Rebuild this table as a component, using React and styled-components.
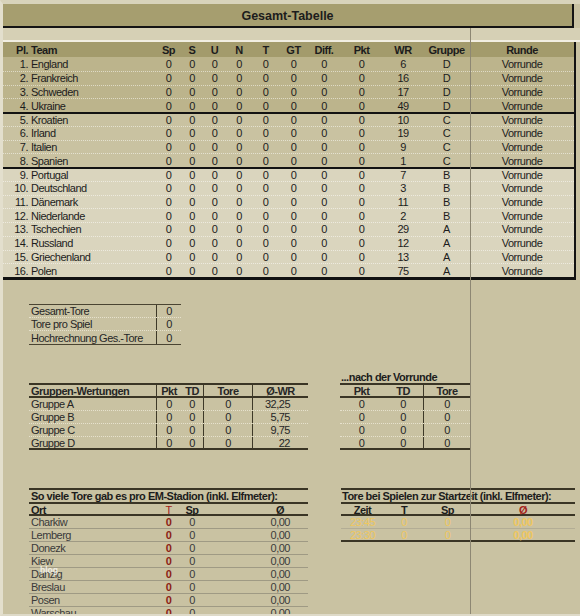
import React from "react";
import styled, { createGlobalStyle } from "styled-components";

const GlobalStyle = createGlobalStyle`
  html, body {
    margin: 0;
    padding: 0;
    background: #c9c2a2;
  }
  body {
    font-family: "Liberation Sans", Arial, sans-serif;
    font-size: 11px;
    letter-spacing: -0.5px;
    color: #1c1c1c;
  }
`;

const MAIN_COLS = "26px 127px 25px 22px 23px 26px 27px 29px 32px 43px 40px 47px 104px";
const GROUP_COLS = "127px 25px 22px 49px 56px";
const SMALL_COLS = "127px 25px";
const RIGHT_COLS = "43px 40px 47px";
const START_COLS = "43px 40px 47px 104px";

const bands = ["#bcb48c", "#c9c2a1", "#dad5be"];

const Page = styled.div`
  position: relative;
  width: 580px;
  height: 616px;
  overflow: hidden;
  box-sizing: border-box;
  border-left: 3px solid #e3dfcd;
  border-top: 4px solid #d8d3bb;
  border-bottom: 2px solid #dedac8;
  background: #c9c2a2;
`;

const PageBreak = styled.div`
  position: absolute;
  left: 467px;
  top: -4px;
  bottom: -2px;
  width: 1px;
  background: #8d8773;
  z-index: 1;
`;

const Watermark = styled.span`
  position: absolute;
  left: 37px;
  top: 561px;
  font-size: 8.5px;
  font-weight: bold;
  letter-spacing: 0;
  color: rgba(255, 255, 255, 0.75);
  z-index: 3;
`;

const TitleBar = styled.div`
  position: relative;
  z-index: 2;
  width: 571px;
  height: 24px;
  display: flex;
  align-items: center;
  justify-content: center;
  padding-top: 1px;
  box-sizing: border-box;
  background: #a69e6f;
  border-right: 2px solid #141414;
  border-bottom: 2px solid #141414;
  font-weight: bold;
  font-size: 12.5px;
  letter-spacing: 0;
`;

const Strip = styled.div`
  height: 12px;
  background: #d6d0b5;
  border-bottom: 2px solid #f1eee2;
`;

const MainTable = styled.div`
  width: 571px;
  border-right: 2px solid #121212;
  border-bottom: 3px solid #121212;
`;

const Row = styled.div`
  display: grid;
  grid-template-columns: ${(p) => p.$cols};
  height: ${(p) => p.$h || 13}px;
  box-sizing: border-box;
  background: ${(p) => p.$bg || "transparent"};
  border-top: ${(p) => p.$top || "none"};
  border-bottom: ${(p) => p.$bottom || "none"};
`;

const Cell = styled.div`
  grid-column: ${(p) => p.$span || "auto"};
  display: flex;
  align-items: center;
  justify-content: ${(p) =>
    p.$align === "left" ? "flex-start" : p.$align === "right" ? "flex-end" : "center"};
  padding: 1px ${(p) => p.$pr || 0}px 0 ${(p) => p.$pl || 0}px;
  font-weight: ${(p) => (p.$bold ? "bold" : "normal")};
  color: ${(p) => p.$color || "inherit"};
  border-left: ${(p) => (p.$divider ? "1px solid #3e3928" : "none")};
  white-space: nowrap;
  line-height: 1;
`;

const Lower = styled.div`
  padding-left: 26px;
`;

const SmallTable = styled.div`
  width: 152px;
  margin-top: 24px;
  border-top: 1px solid #4a4432;
  border-bottom: 1px solid #4a4432;
  color: #262626;
`;

const GroupsRow = styled.div`
  display: flex;
  align-items: flex-end;
  gap: 32px;
  margin-top: 25px;
`;

const Block = styled.div`
  width: ${(p) => p.$w}px;
  color: ${(p) => p.$color || "#262626"};
`;

const Caption = styled.div`
  height: 13px;
  display: flex;
  align-items: flex-end;
  padding-left: 1px;
  font-weight: bold;
  color: #1c1c1c;
`;

const BottomRow = styled.div`
  display: flex;
  align-items: flex-start;
  gap: 33px;
  margin-top: 38px;
`;

const teams = [
  ["England", 6, "D"],
  ["Frankreich", 16, "D"],
  ["Schweden", 17, "D"],
  ["Ukraine", 49, "D"],
  ["Kroatien", 10, "C"],
  ["Irland", 19, "C"],
  ["Italien", 9, "C"],
  ["Spanien", 1, "C"],
  ["Portugal", 7, "B"],
  ["Deutschland", 3, "B"],
  ["Dänemark", 11, "B"],
  ["Niederlande", 2, "B"],
  ["Tschechien", 29, "A"],
  ["Russland", 12, "A"],
  ["Griechenland", 13, "A"],
  ["Polen", 75, "A"],
];

const groups = [
  ["Gruppe A", "32,25"],
  ["Gruppe B", "5,75"],
  ["Gruppe C", "9,75"],
  ["Gruppe D", "22"],
];

const stadiums = ["Charkiw", "Lemberg", "Donezk", "Kiew", "Danzig", "Breslau", "Posen", "Warschau"];
const starts = ["23:45", "23:30"];

const dark = "2px solid #3a3525";
const dots = "1px dotted #e6e1cd";

const App = () => {
  const bandOf = (i) => (i < 4 ? 0 : i < 8 ? 1 : 2);

  return (
    <>
      <GlobalStyle />
      <Page>
        <PageBreak />
        <Watermark>blog</Watermark>
        <TitleBar>Gesamt-Tabelle</TitleBar>
        <Strip />
        <MainTable>
          <Row $cols={MAIN_COLS} $h={15} $bg="#a39b6c">
            <Cell $align="right" $pr={1} $bold>Pl.</Cell>
            <Cell $align="left" $pl={2} $bold>Team</Cell>
            {["Sp", "S", "U", "N", "T", "GT", "Diff.", "Pkt", "WR", "Gruppe", "Runde"].map((h) => (
              <Cell key={h} $bold>{h}</Cell>
            ))}
          </Row>
          {teams.map(([name, wr, grp], i) => {
            const band = bandOf(i);
            const start = i > 0 && i % 4 === 0 && i <= 8;
            return (
              <Row
                key={name}
                $cols={MAIN_COLS}
                $h={13.75}
                $bg={bands[band]}
                $top={start ? "2px solid #121212" : i === 0 ? "none" : "1px dotted rgba(255,255,255,0.5)"}
              >
                <Cell $align="right" $pr={1}>{i + 1}.</Cell>
                <Cell $align="left" $pl={2}>{name}</Cell>
                {[0, 0, 0, 0, 0, 0, 0, 0].map((v, k) => (
                  <Cell key={k}>{v}</Cell>
                ))}
                <Cell>{wr}</Cell>
                <Cell>{grp}</Cell>
                <Cell>Vorrunde</Cell>
              </Row>
            );
          })}
        </MainTable>

        <Lower>
          <SmallTable>
            {["Gesamt-Tore", "Tore pro Spiel", "Hochrechnung Ges.-Tore"].map((label, i) => (
              <Row key={label} $cols={SMALL_COLS} $bottom={i < 2 ? dots : "none"}>
                <Cell $align="left" $pl={2}>{label}</Cell>
                <Cell $divider>0</Cell>
              </Row>
            ))}
          </SmallTable>

          <GroupsRow>
            <Block $w={279}>
              <Row $cols={GROUP_COLS} $h={15} $top={dark} $bottom={dark}>
                <Cell $align="left" $pl={2} $bold>Gruppen-Wertungen</Cell>
                <Cell $divider $bold>Pkt</Cell>
                <Cell $bold>TD</Cell>
                <Cell $divider $bold>Tore</Cell>
                <Cell $divider $bold>Ø-WR</Cell>
              </Row>
              {groups.map(([g, wr], i) => (
                <Row key={g} $cols={GROUP_COLS} $bottom={i < 3 ? dots : dark}>
                  <Cell $align="left" $pl={2}>{g}</Cell>
                  <Cell $divider>0</Cell>
                  <Cell>0</Cell>
                  <Cell $divider>0</Cell>
                  <Cell $divider $align="right" $pr={18}>{wr}</Cell>
                </Row>
              ))}
            </Block>

            <Block $w={130}>
              <Caption>...nach der Vorrunde</Caption>
              <Row $cols={RIGHT_COLS} $h={15} $top={dark} $bottom={dark}>
                <Cell $bold>Pkt</Cell>
                <Cell $bold>TD</Cell>
                <Cell $divider $bold>Tore</Cell>
              </Row>
              {groups.map(([g], i) => (
                <Row key={g} $cols={RIGHT_COLS} $bottom={i < 3 ? dots : dark}>
                  <Cell>0</Cell>
                  <Cell>0</Cell>
                  <Cell $divider>0</Cell>
                </Row>
              ))}
            </Block>
          </GroupsRow>

          <BottomRow>
            <Block $w={279} $color="#3a3a3a">
              <Row $cols={GROUP_COLS} $h={16} $top={dark} $bottom={dark}>
                <Cell $span="1 / -1" $align="left" $pl={2} $bold $color="#1c1c1c">
                  So viele Tore gab es pro EM-Stadion (inkl. Elfmeter):
                </Cell>
              </Row>
              <Row $cols={GROUP_COLS} $h={12} $bottom={dark}>
                <Cell $align="left" $pl={2} $bold $color="#1c1c1c">Ort</Cell>
                <Cell $color="#a3221a">T</Cell>
                <Cell $bold $color="#1c1c1c">Sp</Cell>
                <Cell />
                <Cell $bold $color="#1c1c1c">Ø</Cell>
              </Row>
              {stadiums.map((s) => (
                <Row key={s} $cols={GROUP_COLS} $bottom="1px solid #9f9a84">
                  <Cell $align="left" $pl={2}>{s}</Cell>
                  <Cell $bold $color="#8c1d14">0</Cell>
                  <Cell>0</Cell>
                  <Cell />
                  <Cell $align="right" $pr={18}>0,00</Cell>
                </Row>
              ))}
            </Block>

            <Block $w={234} $color="#efc75e">
              <Row $cols={START_COLS} $h={16} $top={dark} $bottom={dark}>
                <Cell $span="1 / -1" $align="left" $pl={1} $bold $color="#1c1c1c">
                  Tore bei Spielen zur Startzeit (inkl. Elfmeter):
                </Cell>
              </Row>
              <Row $cols={START_COLS} $h={12} $bottom={dark}>
                <Cell $bold $color="#1c1c1c">Zeit</Cell>
                <Cell $bold $color="#1c1c1c">T</Cell>
                <Cell $bold $color="#1c1c1c">Sp</Cell>
                <Cell $bold $color="#a3221a">Ø</Cell>
              </Row>
              {starts.map((t, i) => (
                <Row key={t} $cols={START_COLS} $bottom={i === 0 ? "1px solid #b3ad95" : dark}>
                  <Cell>{t}</Cell>
                  <Cell>0</Cell>
                  <Cell>0</Cell>
                  <Cell $bold>0,00</Cell>
                </Row>
              ))}
            </Block>
          </BottomRow>
        </Lower>
      </Page>
    </>
  );
};

export default App;
